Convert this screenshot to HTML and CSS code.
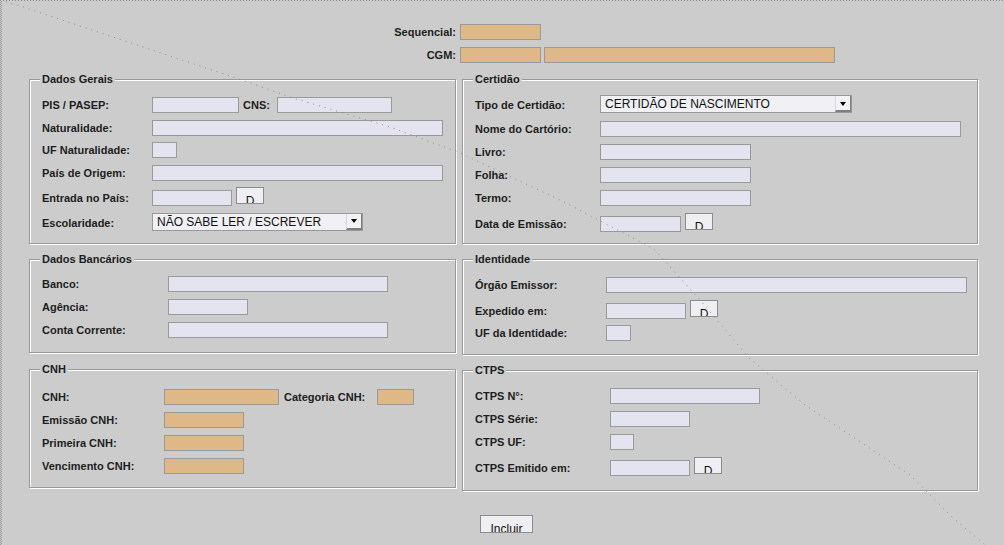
FILE: index.html
```html
<!DOCTYPE html>
<html lang="pt-BR">
<head>
<meta charset="utf-8">
<title>Cadastro</title>
<link rel="stylesheet" href="styles.css">
</head>
<body>
<div class="page">
  <div class="hdr">
    <div class="hrow"><span class="hlbl">Sequencial:</span><span class="fld org w81"></span></div>
    <div class="hrow"><span class="hlbl">CGM:</span><span class="fld org w81"></span><span class="fld org w291 ml3"></span></div>
  </div>

  <div class="cols">
    <div class="col col-l">
      <section class="grp grp-dg">
        <span class="ttl">Dados Gerais</span>
        <div class="rows">
          <div class="row"><span class="lbl">PIS / PASEP:</span><span class="fld w87"></span><span class="lbl il-cns">CNS:</span><span class="fld w115"></span></div>
          <div class="row"><span class="lbl">Naturalidade:</span><span class="fld w291"></span></div>
          <div class="row"><span class="lbl">UF Naturalidade:</span><span class="fld w25"></span></div>
          <div class="row"><span class="lbl">País de Origem:</span><span class="fld w291"></span></div>
          <div class="row row-d"><span class="lbl">Entrada no País:</span><span class="fld w80"></span><span class="btn btn-d">D</span></div>
          <div class="row row-c"><span class="lbl">Escolaridade:</span><div class="combo w211"><span class="combo-txt">NÃO SABE LER / ESCREVER</span><span class="combo-arr"><i class="tri"></i></span></div></div>
        </div>
      </section>

      <section class="grp grp-db">
        <span class="ttl">Dados Bancários</span>
        <div class="rows">
          <div class="row"><span class="lbl">Banco:</span><span class="fld w220"></span></div>
          <div class="row"><span class="lbl">Agência:</span><span class="fld w80"></span></div>
          <div class="row"><span class="lbl">Conta Corrente:</span><span class="fld w220"></span></div>
        </div>
      </section>

      <section class="grp grp-cnh">
        <span class="ttl">CNH</span>
        <div class="rows">
          <div class="row"><span class="lbl">CNH:</span><span class="fld org w115"></span><span class="lbl il-cat">Categoria CNH:</span><span class="fld org w37"></span></div>
          <div class="row"><span class="lbl">Emissão CNH:</span><span class="fld org w80"></span></div>
          <div class="row"><span class="lbl">Primeira CNH:</span><span class="fld org w80"></span></div>
          <div class="row"><span class="lbl">Vencimento CNH:</span><span class="fld org w80"></span></div>
        </div>
      </section>
    </div>

    <div class="col col-r">
      <section class="grp grp-cert">
        <span class="ttl">Certidão</span>
        <div class="rows">
          <div class="row row-c"><span class="lbl">Tipo de Certidão:</span><div class="combo w252"><span class="combo-txt">CERTIDÃO DE NASCIMENTO</span><span class="combo-arr"><i class="tri"></i></span></div></div>
          <div class="row"><span class="lbl">Nome do Cartório:</span><span class="fld w361"></span></div>
          <div class="row"><span class="lbl">Livro:</span><span class="fld w151"></span></div>
          <div class="row"><span class="lbl">Folha:</span><span class="fld w151"></span></div>
          <div class="row"><span class="lbl">Termo:</span><span class="fld w151"></span></div>
          <div class="row row-d"><span class="lbl">Data de Emissão:</span><span class="fld w81"></span><span class="btn btn-d">D</span></div>
        </div>
      </section>

      <section class="grp grp-id">
        <span class="ttl">Identidade</span>
        <div class="rows">
          <div class="row"><span class="lbl">Órgão Emissor:</span><span class="fld w361"></span></div>
          <div class="row row-d"><span class="lbl">Expedido em:</span><span class="fld w80"></span><span class="btn btn-d">D</span></div>
          <div class="row"><span class="lbl">UF da Identidade:</span><span class="fld w25"></span></div>
        </div>
      </section>

      <section class="grp grp-ctps">
        <span class="ttl">CTPS</span>
        <div class="rows">
          <div class="row"><span class="lbl">CTPS N°:</span><span class="fld w150"></span></div>
          <div class="row"><span class="lbl">CTPS Série:</span><span class="fld w80"></span></div>
          <div class="row"><span class="lbl">CTPS UF:</span><span class="fld w24"></span></div>
          <div class="row row-d"><span class="lbl">CTPS Emitido em:</span><span class="fld w80"></span><span class="btn btn-d">D</span></div>
        </div>
      </section>
    </div>
  </div>

  <div class="foot"><span class="btn btn-inc">Incluir</span></div>
</div>

<svg class="ovl" width="1004" height="545" viewBox="0 0 1004 545" aria-hidden="true">
  <line x1="0" y1="0.5" x2="1004" y2="0.5" class="edge"/>
  <line x1="0.5" y1="0" x2="0.5" y2="545" class="edge2"/>
  <line x1="1.5" y1="1" x2="1.5" y2="545" class="edge2"/>
  <polyline class="diag" points="0,0 17,5 233,77 293,98 390,127 458,152 560,200 654,249 700,300 749,358 805,405 910,475 952,517 985,545"/>
</svg>
</body>
</html>
```

FILE: styles.css
```css
* { box-sizing: border-box; }

html, body {
  margin: 0;
  padding: 0;
  background: #cccccc;
  overflow: hidden;
}

body {
  width: 1004px;
  height: 545px;
  position: relative;
  font-family: "Liberation Sans", Arial, sans-serif;
  color: #1e1e1e;
}

.page {
  padding: 24px 0 0 29px;
}

/* header */
.hdr {
  display: flex;
  flex-direction: column;
  gap: 7px;
}
.hrow {
  display: flex;
  height: 16px;
  align-items: center;
}
.hlbl {
  width: 427px;
  margin-right: 4px;
  text-align: right;
  font-weight: bold;
  font-size: 11px;
  line-height: 16px;
}

/* fields */
.fld {
  display: block;
  flex: none;
  height: 16px;
  border: 1px solid #9a9a9a;
  background: #e4e3f0;
}
.org { background: #deb887; }
.ml3 { margin-left: 3px; }

.w24 { width: 24px; }
.w25 { width: 25px; }
.w37 { width: 37px; }
.w80 { width: 80px; }
.w81 { width: 81px; }
.w87 { width: 87px; }
.w115 { width: 115px; }
.w150 { width: 150px; }
.w151 { width: 151px; }
.w211 { width: 211px; }
.w220 { width: 220px; }
.w252 { width: 252px; }
.w291 { width: 291px; }
.w361 { width: 361px; }

/* columns */
.cols {
  display: flex;
  gap: 6px;
  margin-top: 16px;
  align-items: flex-start;
}
.col {
  display: flex;
  flex-direction: column;
}
.col-l { width: 427px; }
.col-r { width: 516px; }

/* group boxes (etched border) */
.grp {
  position: relative;
  border: 1px solid #999999;
  box-shadow: inset 1px 1px 0 #ffffff, 1px 1px 0 #ffffff;
  padding-left: 12px;
}
.ttl {
  position: absolute;
  top: -7px;
  left: 10px;
  padding: 0 2px;
  background: #cccccc;
  font-weight: bold;
  font-size: 11px;
  line-height: 13px;
  white-space: nowrap;
}

.grp-dg   { height: 165px; padding-top: 17px; --lw: 110px; --gap: 6.5px; }
.grp-db   { height: 94px;  padding-top: 16px; margin-top: 15px; --lw: 126px; --gap: 7px; }
.grp-cnh  { height: 119px; padding-top: 19px; margin-top: 16px; --lw: 122px; --gap: 7px; }
.grp-cert { height: 165px; padding-top: 15px; --lw: 125px; --gap: 7px; }
.grp-id   { height: 96px;  padding-top: 17px; margin-top: 15px; --lw: 131px; --gap: 6.5px; }
.grp-ctps { height: 121px; padding-top: 17px; margin-top: 15px; --lw: 135px; --gap: 7px; }

.rows {
  display: flex;
  flex-direction: column;
  gap: var(--gap);
}
.row {
  display: flex;
  align-items: flex-start;
}
.lbl {
  flex: none;
  width: var(--lw);
  font-weight: bold;
  font-size: 11px;
  line-height: 16px;
  white-space: nowrap;
}
.il-cns { width: 34px; margin-left: 4px; }
.il-cat { width: 93px; margin-left: 5px; }

.row-d .lbl,
.row-d .fld { margin-top: 3px; }
.row-d .fld + .btn { margin-left: 4px; }

.row-c .lbl { line-height: 18px; padding-top: 1px; }

/* combo box */
.combo {
  display: flex;
  flex: none;
  height: 18px;
  border: 1px solid #999999;
  background: #f0f0f5;
}
.combo-txt {
  flex: 1;
  padding-left: 4px;
  font-size: 12px;
  line-height: 16px;
  white-space: nowrap;
  overflow: hidden;
  color: #111;
}
.combo-arr {
  flex: none;
  width: 16px;
  display: flex;
  align-items: center;
  justify-content: center;
  background: #f3f3f6;
  border-left: 1px solid #d6d6dc;
  border-right: 1px solid #7e7e7e;
  border-bottom: 2px solid #7e7e7e;
  padding-top: 1px;
}
.tri {
  display: block;
  width: 0;
  height: 0;
  border-left: 3px solid transparent;
  border-right: 3px solid transparent;
  border-top: 4px solid #000000;
}

/* buttons */
.btn {
  display: block;
  flex: none;
  background: #eeeef3;
  border: 1px solid #8c8c8c;
  font-size: 12px;
  line-height: 12px;
  text-align: center;
  overflow: hidden;
  color: #111;
}
.btn-d {
  width: 28px;
  height: 17px;
  padding-top: 7px;
}
.foot {
  margin-top: 24px;
  padding-left: 451px;
}
.btn-inc {
  width: 53px;
  height: 18px;
  padding-top: 7px;
}

/* overlay artefacts */
.ovl {
  position: absolute;
  left: 0;
  top: 0;
  pointer-events: none;
}
.edge {
  stroke: #8a8a8a;
  stroke-width: 1;
  stroke-dasharray: 1 2;
}
.edge2 {
  stroke: #9a9a9a;
  stroke-width: 1;
  stroke-dasharray: 1 1;
}
.diag {
  fill: none;
  stroke: #8c8c8c;
  stroke-width: 1;
  stroke-dasharray: 1 5;
}
```
